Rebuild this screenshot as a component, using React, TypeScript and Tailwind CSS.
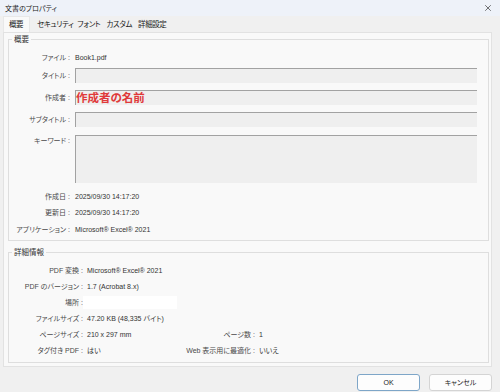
import React from "react";
import { X } from "lucide-react";

const font = {
  fontFamily: '"Liberation Sans", "Noto Sans CJK JP", sans-serif',
};

function Row1({ label, children, h = "h-[16px]", top = false, className = "" }: { label: string; children?: React.ReactNode; h?: string; top?: boolean; className?: string }) {
  return (
    <div className={`flex ${top ? "items-start" : "items-center"} ${h} ${className}`}>
      <div className={`w-[61px] shrink-0 text-right text-[#4a4a4a] ${top ? "pt-[2px]" : ""}`}>{label} :</div>
      <div className="ml-[5px] flex-1 flex items-center h-full text-[#333]">{children}</div>
    </div>
  );
}

function Input({ h = "h-[15px]", children }: { h?: string; children?: React.ReactNode }) {
  return (
    <div className={`w-full ${h} bg-[#efefef] border-t border-l border-[#a2a2a2] flex items-center`}>{children}</div>
  );
}

function Row2({ label, children }: { label: string; children?: React.ReactNode }) {
  return (
    <div className="flex items-center h-[16px]">
      <div className="w-[74px] shrink-0 text-right text-[#4a4a4a]">{label} :</div>
      <div className="flex-1 flex items-center h-full text-[#333]">{children}</div>
    </div>
  );
}

function Group({ title, className = "", children }: { title: string; className?: string; children: React.ReactNode }) {
  return (
    <div className={`relative border border-[#dedede] ${className}`}>
      <div className="absolute left-[3px] top-[-6px] px-[2px] bg-[#f9f9f9] text-[7.5px] leading-[11px] text-[#333]">{title}</div>
      {children}
    </div>
  );
}

export default function App() {
  return (
    <div className="w-[500px] h-[392px] bg-[#f0f0f0] overflow-hidden whitespace-nowrap flex flex-col text-[7px] [font-feature-settings:'palt'] leading-none" style={font}>
      {/* Title bar */}
      <div className="w-[500px] h-[16px] shrink-0 bg-[#eef2f9] flex items-center pl-[5px]">
        <span className="w-[477px] shrink-0 text-[7px] text-[#222]">文書のプロパティ</span>
        <div className="w-[12px] h-[12px] shrink-0 flex items-center justify-center">
          <X size={10} strokeWidth={1.5} color="#222" />
        </div>
      </div>
      {/* Tabs */}
      <div className="h-[16px] shrink-0 flex items-end pl-[3px] text-[7.5px] text-[#222] tracking-[-0.4px]">
        <div className="w-[27px] h-[16px] shrink-0 pl-[5px] flex items-center bg-[#f9f9f9] border-t border-l border-r border-[#e8e8e8]">概要</div>
        <div className="ml-[7px] h-[14px] shrink-0 flex items-center">セキュリティ</div>
        <div className="ml-[4px] h-[14px] shrink-0 flex items-center">フォント</div>
        <div className="ml-[6px] h-[14px] shrink-0 flex items-center">カスタム</div>
        <div className="ml-[6px] h-[14px] shrink-0 flex items-center">詳細設定</div>
      </div>
      {/* Panel */}
      <div className="ml-[3px] mr-[8px] h-[335px] shrink-0 bg-[#f9f9f9] border border-[#e2e2e2] pt-[6px] pl-[4px] pr-[2px]">
        <Group title="概要" className="h-[202px] pt-[9px] pr-[11px]">
          <Row1 label="ファイル">Book1.pdf</Row1>
          <Row1 label="タイトル" h="h-[15px]" className="mt-[3px]"><Input /></Row1>
          <Row1 label="作成者" h="h-[15px]" className="mt-[7px]">
            <Input>
              <span className="text-[11.5px] font-bold text-[#e03a3a] leading-none" style={{ fontFamily: '"Noto Sans CJK JP", sans-serif' }}>作成者の名前</span>
            </Input>
          </Row1>
          <Row1 label="サブタイトル" h="h-[15px]" className="mt-[7px]"><Input /></Row1>
          <Row1 label="キーワード" h="h-[48px]" top className="mt-[8px]"><Input h="h-[48px]" /></Row1>
          <Row1 label="作成日" className="mt-[5px]">2025/09/30 14:17:20</Row1>
          <Row1 label="更新日">2025/09/30 14:17:20</Row1>
          <Row1 label="アプリケーション" className="mt-[1px]">Microsoft® Excel® 2021</Row1>
        </Group>
        <Group title="詳細情報" className="mt-[11px] h-[111px] pt-[9px]">
          <Row2 label="PDF 変換"><span className="pl-[4px]">Microsoft® Excel® 2021</span></Row2>
          <Row2 label="PDF のバージョン"><span className="pl-[4px]">1.7 (Acrobat 8.x)</span></Row2>
          <Row2 label="場所"><div className="w-[94px] h-[13px] bg-white"></div></Row2>
          <Row2 label="ファイルサイズ"><span className="pl-[4px]">47.20 KB (48,335 バイト)</span></Row2>
          <Row2 label="ページサイズ">
            <span className="pl-[4px] w-[98px] shrink-0">210 x 297 mm</span>
            <span className="w-[74px] shrink-0 text-right text-[#4a4a4a]">ページ数 :</span>
            <span className="pl-[4px]">1</span>
          </Row2>
          <Row2 label="タグ付き PDF">
            <span className="pl-[4px] w-[98px] shrink-0">はい</span>
            <span className="w-[74px] shrink-0 text-right text-[#4a4a4a]">Web 表示用に最適化 :</span>
            <span className="pl-[4px]">いいえ</span>
          </Row2>
        </Group>
      </div>
      {/* Buttons */}
      <div className="mt-[7px] flex justify-end gap-[9px] pr-[8px]">
        <button className="w-[63px] h-[17px] bg-[#fdfdfd] border border-[#7ea6c8] rounded-[3px] text-[7px] text-[#222]">OK</button>
        <button className="w-[63px] h-[17px] bg-[#fdfdfd] border border-[#d4d4d4] rounded-[3px] text-[7px] text-[#222]">キャンセル</button>
      </div>
    </div>
  );
}
